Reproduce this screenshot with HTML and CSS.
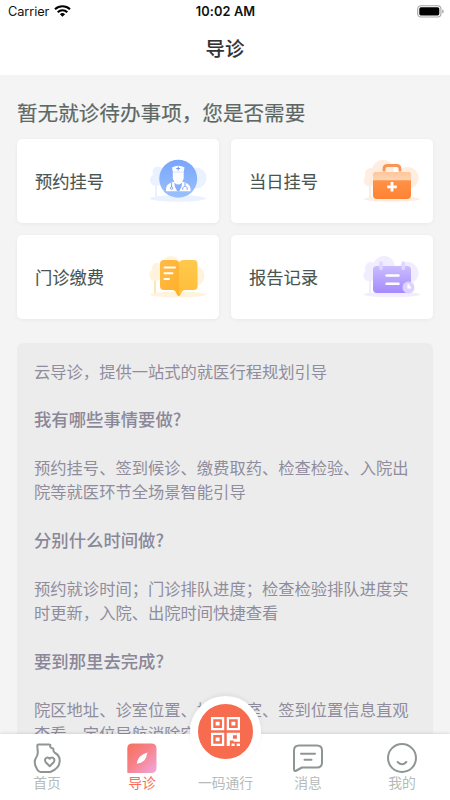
FILE: index.html
```html
<!DOCTYPE html>
<html lang="zh-CN">
<head>
<meta charset="utf-8">
<title>导诊</title>
<link rel="stylesheet" href="styles.css">
</head>
<body>
<div class="app">
  <header class="top">
    <div class="status">
      <div class="carrier"><span>Carrier</span>
        <svg width="17" height="12" viewBox="0 0 17 12"><g fill="none" stroke="#000" stroke-width="2.1"><path d="M1 4.3a10.8 10.8 0 0 1 15 0"/><path d="M3.7 7.2a6.9 6.9 0 0 1 9.6 0"/></g><path d="M8.5 11.8L5.9 9.2a3.7 3.7 0 0 1 5.2 0z"/></svg>
      </div>
      <div class="time">10:02 AM</div>
      <div class="battery"><svg width="27" height="13" viewBox="0 0 27 13"><rect x=".7" y=".7" width="23.2" height="11.3" rx="3.2" fill="#fff" stroke="#a5a5a5" stroke-width="1.1"/><rect x="2.3" y="2.3" width="20" height="8.1" rx="1.6"/><path d="M25.2 4.3q1.5.7 1.5 2.1t-1.5 2.1z" fill="#a5a5a5"/></svg></div>
    </div>
    <h1>导诊</h1>
  </header>
  <main>
    <h2>暂无就诊待办事项，您是否需要</h2>
    <section class="cards">
      <div class="card"><span>预约挂号</span>
        <svg width="60" height="48" viewBox="0 0 60 48">
          <defs><linearGradient id="blue" x2="0" y2="1"><stop stop-color="#78a6fb"/><stop offset="1" stop-color="#9ac0fc"/></linearGradient></defs>
          <g fill="#eaf1ff"><ellipse cx="29" cy="41.5" rx="28" ry="3.2"/><circle cx="9" cy="15" r="5.5"/><circle cx="7" cy="23" r="6"/><circle cx="47" cy="21" r="10.5"/><rect x="6" y="24" width="2" height="17"/></g>
          <circle cx="29.2" cy="21.8" r="19" fill="url(#blue)"/>
          <path d="M17 34.300c0-5 1-7 4.500-8.300l4-1.500 3.700 5 3.700-5 4 1.500c3.500 1.300 4.800 3.500 4.800 8.300z" fill="#fff"/>
          <path d="M25.200 25.500l4 3.200 4-3.200-.8 4.500-2.200 4.300h-2l-2.200-4.300z" fill="#86aff8"/>
          <path d="M23.800 14.500L23 10.500q6.200-3.500 12.500 0l-.8 4v6.500q-1 5.500-5.400 6.500-4.500-1-5.500-6.500z" fill="#fff"/>
          <path d="M24 15h10.500" stroke="#c9dcff" stroke-width=".8"/><path d="M29.200 9.500v4M27.200 11.500h4" stroke="#6f9bf5" stroke-width="1.100"/>
          <path d="M22.600 26v4M36 26v2.500m-2.200 4.300v-2q2.200-3.500 4.400 0v2" fill="none" stroke="#759dea" stroke-width=".9"/><circle cx="22.600" cy="31.200" r="1.200" fill="none" stroke="#759dea" stroke-width=".9"/>
        </svg></div>
      <div class="card"><span>当日挂号</span>
        <svg width="60" height="48" viewBox="0 0 60 48">
          <defs><linearGradient id="orange" x2="0" y2="1"><stop stop-color="#ff9851"/><stop offset="1" stop-color="#ff8334"/></linearGradient><linearGradient id="peach" x2="0" y2="1"><stop stop-color="#ffc59a"/><stop offset="1" stop-color="#ffd6b7"/></linearGradient></defs>
          <g fill="#ffeddf"><ellipse cx="30" cy="42" rx="28" ry="2.700"/><circle cx="21" cy="14" r="11"/><circle cx="9" cy="17" r="6"/><circle cx="7.500" cy="23.500" r="5.800"/><circle cx="45.500" cy="21" r="11"/><rect x="7" y="24" width="2" height="17"/></g>
          <path d="M22 14.500V12q0-3.500 3.500-3.500h9q3.500 0 3.500 3.500v2.500" fill="none" stroke="#f99556" stroke-width="2.800"/>
          <rect x="11" y="15" width="38" height="27" rx="4" fill="url(#orange)"/><path d="M11 23.300V19q0-4 4-4h30q4 0 4 4v4.300z" fill="url(#peach)"/>
          <path d="M30 25v9.600M25.200 29.800h9.600" stroke="#fff" stroke-width="2.800"/>
        </svg></div>
      <div class="card"><span>门诊缴费</span>
        <svg width="60" height="48" viewBox="0 0 60 48">
          <defs><linearGradient id="gold" x2="1" y2="1"><stop stop-color="#ffba48"/><stop offset="1" stop-color="#ffb029"/></linearGradient><linearGradient id="gold2" x2="0" y2="1"><stop stop-color="#ffc94d"/><stop offset="1" stop-color="#ffbd39"/></linearGradient></defs>
          <g fill="#fff3dc"><ellipse cx="29" cy="41.500" rx="28" ry="3"/><circle cx="22" cy="13" r="10"/><circle cx="8" cy="15" r="5"/><circle cx="6.500" cy="22" r="6.200"/><circle cx="45" cy="23" r="10.500"/></g><path d="M6 28v12" stroke="#ffe6b8" stroke-width="2"/>
          <path d="M11 11q0-4 4-4h10.500q3.500 0 4.500 2.500v33.500q-1.500 0-2-1.500l-1.500-3q-1-1.500-3-1.500H15q-4 0-4-4z" fill="url(#gold)"/><path d="M30 9.500Q31 7 34.500 7h10q4 0 4 4v22q0 4-4 4h-8.500q-2 0-3 1.500l-1.500 3q-.5 1.500-1.500 1.500z" fill="url(#gold2)"/>
          <path d="M15.500 14.500h10.500M15.500 20.200h8M15.500 26h4.500" stroke="#fff" stroke-width="2" stroke-linecap="round"/>
        </svg></div>
      <div class="card"><span>报告记录</span>
        <svg width="60" height="48" viewBox="0 0 60 48">
          <defs><linearGradient id="violet" x2="0" y2="1"><stop stop-color="#cabdff"/><stop offset="1" stop-color="#a58afb"/></linearGradient></defs>
          <g fill="#f1edff"><ellipse cx="30" cy="41.500" rx="28.500" ry="2.700"/><circle cx="22" cy="14" r="11"/><circle cx="9" cy="15" r="6"/><circle cx="7.500" cy="22.500" r="6"/><circle cx="45.500" cy="20" r="11"/><rect x="7" y="24" width="2" height="17"/></g>
          <rect x="11" y="13" width="38" height="27" rx="4" fill="url(#violet)"/>
          <path d="M19 10v5.500M41.300 10v5.500" stroke="#dfd7ff" stroke-width="3.600" stroke-linecap="round"/><path d="M24.500 22.500h12M24.500 30.700h12" stroke="#fff" stroke-width="2.500" stroke-linecap="round"/>
          <circle cx="46.500" cy="34.500" r="6" fill="#ddd2ff"/><path d="M46.500 31.200v3.300h2.500" fill="none" stroke="#fff" stroke-width="2.200"/>
        </svg></div>
    </section>
    <article class="guide">
      <p>云导诊，提供一站式的就医行程规划引导</p>
      <h3>我有哪些事情要做?</h3>
      <p>预约挂号、签到候诊、缴费取药、检查检验、入院出院等就医环节全场景智能引导</p>
      <h3>分别什么时间做?</h3>
      <p>预约就诊时间；门诊排队进度；检查检验排队进度实时更新，入院、出院时间快捷查看</p>
      <h3>要到那里去完成?</h3>
      <p>院区地址、诊室位置、检查科室、签到位置信息直观查看，定位导航消除空间</p>
    </article>
  </main>
  <nav>
    <div class="tab"><svg width="32" height="32" viewBox="0 0 32 32" fill="none" stroke="#8d9692" stroke-width="2" stroke-linejoin="round" stroke-linecap="round"><path d="M7.500 2.500h10.500q1.500 0 1.300 1.300-.3 2 1.300 2.200 2 .1 1.800 1.800-.2 2 1.700 3.200 4.600 2.500 4.600 7.500 0 8-9.400 11.500H9.500q-2-.2-3.300-2.500Q1.800 20.500 5.200 15.500q2-3 1.500-6.500L6.300 4Q6.200 2.500 7.500 2.500z"/><path d="M18.700 24.200l-4-4q-1.600-2.500.4-4.200 2-1.200 3.600.8 1.600-2 3.600-.8 2 1.700.4 4.200z"/></svg><span>首页</span></div>
    <div class="tab active"><svg width="32" height="32" viewBox="0 0 32 32"><defs><linearGradient id="nav" x2="1" y2="1"><stop stop-color="#f6705b"/><stop offset=".45" stop-color="#f68089"/><stop offset="1" stop-color="#f2a9df"/></linearGradient></defs><path d="M1.300 31V6.500q0-5 5-5h19q5.200 0 5.200 5V26q0 5-5.200 5z" fill="url(#nav)"/><path d="M10.700 21.700q1-5.200 3.400-7.300 2.400-2.500 7.400-4-1 5.400-3.200 8-2.600 2.500-7.600 3.300z" fill="#fff"/></svg><span>导诊</span></div>
    <div class="tab"><div class="scan"><svg width="29" height="29" viewBox="0 0 28 28"><g fill="none" stroke="#fff" stroke-width="2.200"><path d="M1.100 1.100h10.600v10.600H1.100zM16.300 1.100h10.600v10.600H16.300zM1.100 16.300h10.600v10.600H1.100z"/></g><path d="M4.500 4.500h3.800v3.800H4.500zM19.700 4.500h3.800v3.800h-3.800zM4.500 19.700h3.800v3.800H4.500zM15.200 15.200h9.600v2.300h-3.600v3.500H25v-5.800h3v8.600h-6.200v-1.200h-3.600V28h-3zM19.800 25.600h3V28h-3zM24.800 25.600H28V28h-3.200z" fill="#fff"/></svg></div><span>一码通行</span></div>
    <div class="tab"><svg width="32" height="32" viewBox="0 0 32 32" fill="none" stroke="#8d9692" stroke-width="2" stroke-linecap="round" stroke-linejoin="round"><path d="M2 27V8.500q0-5 5-5h18q5 0 5 5v12q0 5-5 5H10l-5.500 3Q2 29.800 2 27z"/><path d="M9 11.800h14M12.500 17.800h7"/></svg><span>消息</span></div>
    <div class="tab"><svg width="32" height="32" viewBox="0 0 32 32" fill="none" stroke="#8d9692" stroke-width="2" stroke-linecap="round"><circle cx="16" cy="16" r="14"/><path d="M11.700 20q4.300 4.400 8.600 0"/></svg><span>我的</span></div>
  </nav>
</div>
</body>
</html>
```
FILE: styles.css
```css
* { box-sizing: border-box; margin: 0; padding: 0; }
body { font-family: "Noto Sans CJK SC", sans-serif; background: #f4f4f4; }
svg { display: block; flex: none; }
.app { width: 450px; height: 800px; display: flex; flex-direction: column; overflow: hidden; }
.top { height: 75px; flex: none; background: #fff; }
.status { height: 24px; display: grid; grid-template-columns: 1fr auto 1fr; align-items: center; padding: 0 7px 0 8px; font: 12.8px/24px Inter, sans-serif; color: #111; }
.carrier { display: flex; align-items: center; gap: 5px; letter-spacing: -0.1px; }
.carrier svg { margin-top: -2px; }
.time { font-weight: 600; letter-spacing: 0.1px; }
.battery { justify-self: end; margin: -1px -1px 0 0; }
h1 { font-size: 19.5px; line-height: 48px; text-align: center; font-weight: 500; color: #333; -webkit-text-stroke: 0.1px #333; }
main { flex: 1; min-height: 0; overflow: hidden; padding: 21.5px 17px 0 16.5px; }
h2 { font-size: 20.6px; line-height: 30px; font-weight: 400; color: #5c6864; -webkit-text-stroke: 0.2px #5c6864; white-space: nowrap; padding-left: 0.5px; }
.cards { display: grid; grid-template-columns: 202px 202px; grid-auto-rows: 84px; gap: 12px; margin-top: 12px; }
.card { display: flex; justify-content: space-between; align-items: center; padding: 0 10px 0 18.5px; background: #fff; border-radius: 5px; box-shadow: 0 1px 4px rgba(0,0,0,.05); font-size: 17.3px; color: #485550; -webkit-text-stroke: 0.1px #485550; }
.card:nth-child(even) { padding-right: 10.5px; }
.card span { margin-top: -1px; }
.card svg { -webkit-text-stroke: 0; }
.guide { width: 416.5px; height: 460px; margin-top: 24px; padding: 16px 17px 0 17.5px; background: #ececec; border-radius: 6px; font-size: 16.29px; line-height: 24.15px; color: #8f8d9d; }
.guide p { width: 377px; }
.guide h3 { font-size: 17.35px; line-height: 24.15px; margin: 24.65px 0 23.65px; font-weight: 500; color: #8a8798; }
nav { position: relative; height: 66px; flex: none; display: grid; grid-template-columns: 94px 96px 71px 94px 94px; background: #fff; box-shadow: 0 -1px 3px rgba(0,0,0,.1); }
.tab { display: flex; flex-direction: column; align-items: center; padding-top: 8px; font-size: 13.8px; line-height: 20px; color: #b5bbb8; white-space: nowrap; }
.tab span { margin-top: -2px; }
.active { color: #f6705b; }
.scan { display: flex; align-items: center; justify-content: center; width: 71px; height: 71px; flex: none; margin: -46px 0 7px; border: 8.5px solid #fff; border-radius: 50%; background: #f76b4f; box-shadow: 0 -2px 4px rgba(0,0,0,.06); }
```
